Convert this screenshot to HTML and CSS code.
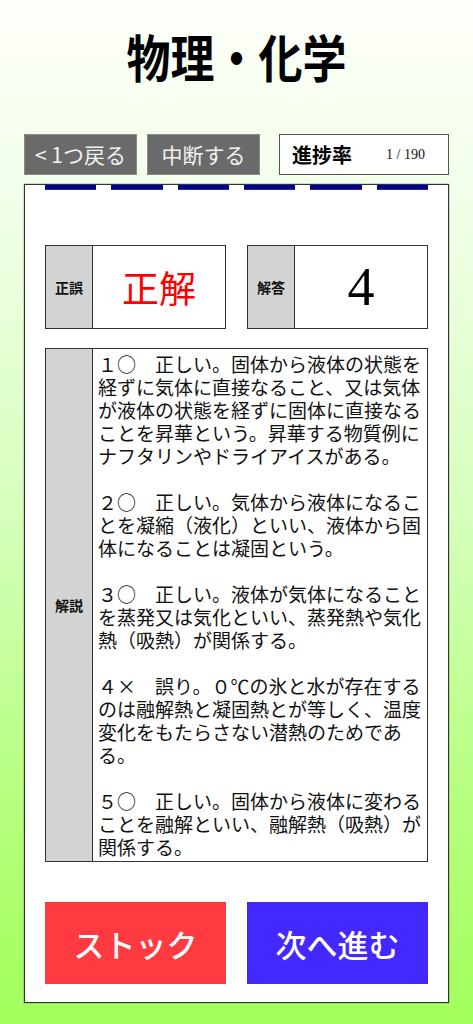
FILE: index.html
```html
<!DOCTYPE html>
<html lang="ja">
<head>
<meta charset="utf-8">
<title>物理・化学</title>
<link rel="stylesheet" href="styles.css">
</head>
<body>
<div class="page">
  <h1 class="title"><span class="title-text">物理・化学</span></h1>
  <div class="toolbar">
    <button class="tool-btn back">&lt; 1つ戻る</button>
    <button class="tool-btn pause">中断する</button>
    <div class="progress">
      <span class="progress-label">進捗率</span>
      <span class="progress-value">1 / 190</span>
    </div>
  </div>
  <div class="card">
    <div class="dashes">
      <span class="dash"></span><span class="dash"></span><span class="dash"></span>
      <span class="dash"></span><span class="dash"></span><span class="dash"></span>
    </div>
    <div class="info-row">
      <div class="info-box">
        <div class="info-label">正誤</div>
        <div class="info-value result">正解</div>
      </div>
      <div class="info-box">
        <div class="info-label">解答</div>
        <div class="info-value answer">4</div>
      </div>
    </div>
    <div class="explain">
      <div class="explain-label">解説</div>
      <div class="explain-text">
        <p>１○　正しい。固体から液体の状態を経ずに気体に直接なること、又は気体が液体の状態を経ずに固体に直接なることを昇華という。昇華する物質例にナフタリンやドライアイスがある。</p>
        <p>２○　正しい。気体から液体になることを凝縮（液化）といい、液体から固体になることは凝固という。</p>
        <p>３○　正しい。液体が気体になることを蒸発又は気化といい、蒸発熱や気化熱（吸熱）が関係する。</p>
        <p>４×　誤り。０℃の氷と水が存在するのは融解熱と凝固熱とが等しく、温度変化をもたらさない潜熱のためである。</p>
        <p>５○　正しい。固体から液体に変わることを融解といい、融解熱（吸熱）が関係する。</p>
      </div>
    </div>
    <div class="actions">
      <button class="action stock">ストック</button>
      <button class="action next">次へ進む</button>
    </div>
  </div>
</div>
</body>
</html>
```

FILE: styles.css
```css
* { box-sizing: border-box; }
html, body { margin: 0; padding: 0; }
body {
  font-family: "Noto Sans CJK JP", "Noto Sans", sans-serif;
  color: #111;
}
.page {
  width: 473px;
  height: 1024px;
  padding: 0 24px;
  background: linear-gradient(to bottom, #fefffa 0%, #f2ffe8 20%, #d6ffbc 50%, #b6ff80 78%, #a3ff5a 100%);
  display: flex;
  flex-direction: column;
}
.title {
  margin: 0;
  height: 134px;
  padding-top: 24px;
  text-align: center;
  font-size: 44px;
  font-weight: 700;
  line-height: 64px;
  color: #000;
}
.title-text {
  display: inline-block;
  transform: scaleY(1.15);
}
.toolbar {
  display: flex;
  height: 41px;
}
.tool-btn {
  font-family: "Noto Sans CJK JP", sans-serif;
  font-size: 21px;
  color: #f2f2f2;
  background: #6a6a6a;
  border: 1px solid #8a8a8a;
  padding: 0;
  height: 41px;
  width: 113px;
  line-height: 1;
  white-space: pre;
}
.pause { margin-left: 10px; }
.progress {
  margin-left: 19px;
  flex: 1;
  background: #fff;
  border: 1px solid #555;
  display: flex;
  align-items: center;
  padding-left: 12px;
}
.progress-label {
  font-size: 20px;
  font-weight: 700;
  color: #000;
}
.progress-value {
  margin-left: 34px;
  font-family: "Liberation Serif", serif;
  font-size: 14px;
  color: #111;
}
.card {
  margin-top: 9px;
  height: 819px;
  background: #fff;
  border: 1px solid #333;
  box-shadow: 0 0 1px #333;
  padding: 0 20px;
  display: flex;
  flex-direction: column;
}
.dashes {
  display: flex;
  gap: 15px;
  height: 5px;
}
.dash {
  flex: 1;
  background: #00009a;
  border-bottom: 1px solid #333366;
}
.info-row {
  display: flex;
  gap: 21px;
  margin-top: 55px;
}
.info-box {
  flex: 1;
  height: 84px;
  border: 1px solid #333;
  display: flex;
}
.info-label {
  width: 47px;
  background: #d3d3d3;
  border-right: 1px solid #333;
  display: flex;
  align-items: center;
  justify-content: center;
  font-size: 14px;
  font-weight: 700;
  color: #111;
}
.info-value {
  flex: 1;
  display: flex;
  align-items: center;
  justify-content: center;
}
.result {
  color: #ff0000;
  font-size: 37px;
  font-weight: 400;
}
.answer {
  font-family: "Liberation Serif", serif;
  font-size: 54px;
  color: #000;
}
.explain {
  margin-top: 19px;
  border: 1px solid #333;
  display: flex;
}
.explain-label {
  width: 47px;
  flex: none;
  background: #d3d3d3;
  border-right: 1px solid #333;
  display: flex;
  align-items: center;
  justify-content: center;
  font-size: 14px;
  font-weight: 700;
  color: #111;
}
.explain-text {
  flex: 1;
  padding: 3px 4px 3px 5px;
  font-size: 19px;
  line-height: 23px;
  color: #111;
}
.explain-text p {
  margin: 0 0 23px 0;
}
.explain-text p:last-child { margin-bottom: 0; }
.actions {
  margin-top: 40px;
  display: flex;
  gap: 21px;
}
.action {
  flex: 1;
  height: 82px;
  border: none;
  padding: 0;
  color: #fff;
  font-family: "Noto Sans CJK JP", sans-serif;
  font-size: 31px;
  font-weight: 500;
}
.stock { background: #ff3a40; }
.next { background: #4329ff; }
```
